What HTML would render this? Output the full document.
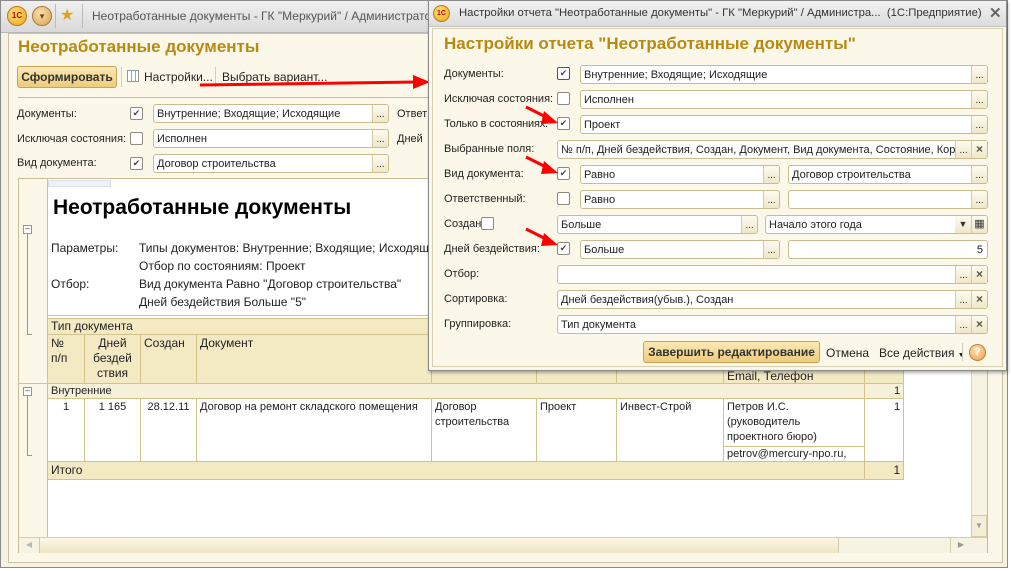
<!DOCTYPE html>
<html><head><meta charset="utf-8"><style>
*{margin:0;padding:0;box-sizing:border-box}
body{width:1011px;height:571px;position:relative;overflow:hidden;background:#fff;font-family:"Liberation Sans",Arial,sans-serif;font-size:11px;color:#222}
.a{position:absolute;white-space:nowrap}
.f{position:absolute;height:19px;border:1px solid #c9bc8f;border-radius:3px;background:#fff;line-height:18px;padding-left:3px;overflow:hidden;white-space:nowrap}
.d{position:absolute;right:0;top:0;width:16px;height:17px;border-left:1px solid #d6cba2;background:linear-gradient(#fdfbf1,#efe7c8);font-style:normal;text-align:center;font-size:10px;line-height:20px;color:#333}
.x{position:absolute;right:0;top:0;width:16px;height:17px;border-left:1px solid #d6cba2;background:linear-gradient(#fdfbf1,#efe7c8);font-style:normal;text-align:center;font-weight:bold;font-size:12px;line-height:17px;color:#554}
.c{position:absolute;width:13px;height:13px;border:1px solid #8d8a80;border-radius:2px;background:#fff;font-size:9px;line-height:11px;text-align:center;color:#444}
.gold{color:#b88a12;font-weight:bold}
table{border-collapse:collapse;table-layout:fixed;position:absolute;font-size:11px}
td{border:1px solid #d2c38c;vertical-align:top;padding:1px 3px;line-height:15px}
.h td{background:#f3eac4;font-size:12px}
</style></head><body>

<!-- MAIN WINDOW -->
<div class="a" style="left:0;top:0;width:1008px;height:568px;border:1px solid #8a8a8a;background:#f6f3e3"></div>
<div class="a" style="left:1px;top:1px;width:1006px;height:32px;background:linear-gradient(#f0f0f0,#d9d9d9);border-bottom:1px solid #b9b9b9"></div>
<div class="a" style="left:7px;top:6px;width:20px;height:20px;border-radius:50%;background:radial-gradient(circle at 40% 35%,#ffe27a,#f0a21a);border:1px solid #c07a10;font-size:8px;font-weight:bold;color:#c00;text-align:center;line-height:18px">1С</div>
<div class="a" style="left:32px;top:6px;width:20px;height:20px;border-radius:50%;background:radial-gradient(circle at 40% 35%,#f8e0b0,#d9a050);border:1px solid #b07a30;font-size:9px;color:#704000;text-align:center;line-height:18px">▾</div>
<div class="a" style="left:55px;top:4px;width:1px;height:24px;background:#bbb"></div>
<div class="a" style="left:60px;top:5px;font-size:16px;color:#e0a020">★</div>
<div class="a" style="left:82px;top:4px;width:1px;height:24px;background:#bbb"></div>
<div class="a" style="left:92px;top:9px;font-size:12px;color:#555">Неотработанные документы - ГК "Меркурий" / Администратор / Д</div>

<div class="a" style="left:8px;top:33px;width:995px;height:530px;background:#fbf8ea;border:1px solid #c9c2a4"></div>
<div class="a gold" style="left:18px;top:37px;font-size:17px">Неотработанные документы</div>

<div class="a" style="left:17px;top:66px;width:100px;height:22px;border:1px solid #c9a456;border-radius:3px;background:linear-gradient(#fbe9b4,#eecb7c);font-weight:bold;font-size:12px;text-align:center;line-height:20px;color:#333">Сформировать</div>
<div class="a" style="left:121px;top:67px;width:1px;height:20px;background:#ccc"></div>
<div class="a" style="left:127px;top:70px;width:12px;height:12px;border:1px solid #8899aa;background:repeating-linear-gradient(90deg,#fff 0 3px,#99a8b8 3px 4px)"></div>
<div class="a" style="left:144px;top:70px;font-size:12px">Настройки...</div>
<div class="a" style="left:215px;top:67px;width:1px;height:20px;background:#ccc"></div>
<div class="a" style="left:222px;top:70px;font-size:12px">Выбрать вариант...</div>
<div class="a" style="left:18px;top:97px;width:420px;height:1px;background:#c9bd92"></div>

<div class="a" style="left:17px;top:108px">Документы:</div>
<div class="c" style="left:130px;top:107px">✔</div>
<div class="f" style="left:153px;top:104px;width:236px">Внутренние; Входящие; Исходящие<i class="d">...</i></div>
<div class="a" style="left:397px;top:108px">Ответ</div>
<div class="a" style="left:17px;top:133px">Исключая состояния:</div>
<div class="c" style="left:130px;top:132px"></div>
<div class="f" style="left:153px;top:129px;width:236px">Исполнен<i class="d">...</i></div>
<div class="a" style="left:397px;top:133px">Дней</div>
<div class="a" style="left:17px;top:157px">Вид документа:</div>
<div class="c" style="left:130px;top:157px">✔</div>
<div class="f" style="left:153px;top:154px;width:236px">Договор строительства<i class="d">...</i></div>

<!-- report panel -->
<div class="a" style="left:18px;top:178px;width:970px;height:375px;border:1px solid #c7bd95;background:#fbf8ea"></div>
<div class="a" style="left:47px;top:179px;width:924px;height:358px;background:#fff;border-left:1px solid #d2c38c"></div>
<div class="a" style="left:48px;top:180px;width:63px;height:7px;border:1px solid #d8e0f0;background:#eef2fa"></div>
<div class="a" style="left:53px;top:196px;font-size:21px;font-weight:bold;color:#000">Неотработанные документы</div>
<div class="a" style="left:51px;top:239px;font-size:12px;line-height:18px">Параметры:<br><br>Отбор:</div>
<div class="a" style="left:139px;top:239px;font-size:12px;line-height:18px">Типы документов: Внутренние; Входящие; Исходящие<br>Отбор по состояниям: Проект<br>Вид документа Равно "Договор строительства"<br>Дней бездействия Больше "5"</div>
<div class="a" style="left:47px;top:315px;width:924px;height:1px;background:#d2c38c"></div>
<div class="a" style="left:23px;top:225px;width:9px;height:9px;border:1px solid #a09870;background:#fff;font-size:8px;line-height:6px;text-align:center">–</div>
<div class="a" style="left:27px;top:234px;width:5px;height:101px;border-left:1px solid #a09870;border-bottom:1px solid #a09870"></div>
<div class="a" style="left:23px;top:387px;width:9px;height:9px;border:1px solid #a09870;background:#fff;font-size:8px;line-height:6px;text-align:center">–</div>
<div class="a" style="left:27px;top:396px;width:5px;height:60px;border-left:1px solid #a09870;border-bottom:1px solid #a09870"></div>
<div class="a" style="left:18px;top:383px;width:29px;height:1px;background:#d2c38c"></div>

<table style="left:47px;top:318px;width:856px">
<colgroup><col style="width:37px"><col style="width:56px"><col style="width:56px"><col style="width:235px"><col style="width:105px"><col style="width:80px"><col style="width:107px"><col style="width:141px"><col style="width:39px"></colgroup>
<tr class="h" style="height:16px"><td colspan="9" style="line-height:13px;border-right-color:#f3eac4">Тип документа</td></tr>
<tr class="h" style="height:49px"><td>№<br>п/п</td><td style="text-align:center">Дней<br>бездей<br>ствия</td><td>Создан</td><td>Документ</td><td></td><td></td><td></td><td style="vertical-align:bottom;line-height:12px;overflow:hidden">Email, Телефон</td><td></td></tr>
<tr style="height:15px;background:#f7f1d9"><td colspan="8" style="line-height:12px">Внутренние</td><td style="text-align:right;line-height:12px">1</td></tr>
<tr style="height:43px"><td rowspan="2" style="text-align:center">1</td><td rowspan="2" style="text-align:center">1 165</td><td rowspan="2" style="text-align:center">28.12.11</td><td rowspan="2">Договор на ремонт складского помещения</td><td rowspan="2">Договор<br>строительства</td><td rowspan="2">Проект</td><td rowspan="2">Инвест-Строй</td><td>Петров И.С.<br>(руководитель<br>проектного бюро)</td><td rowspan="2" style="text-align:right">1</td></tr>
<tr style="height:15px"><td style="line-height:12px">petrov@mercury-npo.ru,</td></tr>
<tr class="h" style="height:18px"><td colspan="8" style="line-height:15px">Итого</td><td style="text-align:right">1</td></tr>
</table>

<div class="a" style="left:971px;top:179px;width:16px;height:358px;background:#f7f3e2;border-left:1px solid #ddd4b0"></div>
<div class="a" style="left:971px;top:515px;width:16px;height:22px;border:1px solid #d6cca6;background:#f3eed8;color:#999;font-size:8px;text-align:center;line-height:20px">▼</div>
<div class="a" style="left:19px;top:537px;width:968px;height:16px;background:#f7f3e2;border-top:1px solid #d6cca6"></div>
<div class="a" style="left:19px;top:537px;width:21px;height:16px;border-right:1px solid #d6cca6;color:#bbb;font-size:8px;text-align:center;line-height:16px">◀</div>
<div class="a" style="left:40px;top:538px;width:799px;height:15px;background:linear-gradient(#fbf7e6,#eee5c3);border-right:1px solid #d6cca6"></div>
<div class="a" style="left:950px;top:537px;width:21px;height:16px;border-left:1px solid #d6cca6;color:#999;font-size:8px;text-align:center;line-height:16px">▶</div>

<svg class="a" style="left:195px;top:70px" width="240" height="25"><line x1="5" y1="15" x2="222" y2="12" stroke="#f00" stroke-width="3"/><polygon points="218,5 235,12 218,19" fill="#f00"/></svg>

<!-- DIALOG -->
<div class="a" style="left:428px;top:0;width:579px;height:371px;border:1px solid #8a8a8a;background:#fbf8ea;box-shadow:1px 2px 3px rgba(0,0,0,.3)"></div>
<div class="a" style="left:429px;top:1px;width:577px;height:26px;background:linear-gradient(#f2f2f2,#dcdcdc);border-bottom:1px solid #c4c4c4"></div>
<div class="a" style="left:433px;top:5px;width:17px;height:17px;border-radius:50%;background:radial-gradient(circle at 40% 35%,#ffe27a,#f0a21a);border:1px solid #c07a10;font-size:7px;font-weight:bold;color:#c00;text-align:center;line-height:15px">1С</div>
<div class="a" style="left:459px;top:7px;font-size:11.3px;color:#333">Настройки отчета "Неотработанные документы" - ГК "Меркурий" / Администра...&nbsp; (1С:Предприятие)</div>
<div class="a" style="left:989px;top:4px;font-size:15px;color:#666;font-weight:bold">✕</div>
<div class="a" style="left:432px;top:28px;width:571px;height:339px;border:1px solid #d8d0b0"></div>
<div class="a gold" style="left:444px;top:34px;font-size:17px">Настройки отчета "Неотработанные документы"</div>

<div class="a" style="left:444px;top:68px">Документы:</div>
<div class="c" style="left:557px;top:67px;border-color:#555">✔</div>
<div class="f" style="left:580px;top:65px;width:408px">Внутренние; Входящие; Исходящие<i class="d">...</i></div>

<div class="a" style="left:444px;top:93px">Исключая состояния:</div>
<div class="c" style="left:557px;top:92px"></div>
<div class="f" style="left:580px;top:90px;width:408px">Исполнен<i class="d">...</i></div>

<div class="a" style="left:444px;top:118px;letter-spacing:-0.2px">Только в состояниях:</div>
<div class="c" style="left:557px;top:117px">✔</div>
<div class="f" style="left:580px;top:115px;width:408px">Проект<i class="d">...</i></div>

<div class="a" style="left:444px;top:143px">Выбранные поля:</div>
<div class="f" style="left:557px;top:140px;width:431px;padding-right:34px">№ п/п, Дней бездействия, Создан, Документ, Вид документа, Состояние, Кор<i class="d" style="right:16px">...</i><i class="x">×</i></div>

<div class="a" style="left:444px;top:168px">Вид документа:</div>
<div class="c" style="left:557px;top:167px">✔</div>
<div class="f" style="left:580px;top:165px;width:200px">Равно<i class="d">...</i></div>
<div class="f" style="left:788px;top:165px;width:200px">Договор строительства<i class="d">...</i></div>

<div class="a" style="left:444px;top:193px">Ответственный:</div>
<div class="c" style="left:557px;top:192px"></div>
<div class="f" style="left:580px;top:190px;width:200px">Равно<i class="d">...</i></div>
<div class="f" style="left:788px;top:190px;width:200px"><i class="d">...</i></div>

<div class="a" style="left:444px;top:218px">Создан:</div>
<div class="c" style="left:481px;top:217px"></div>
<div class="f" style="left:557px;top:215px;width:201px">Больше<i class="d">...</i></div>
<div class="f" style="left:765px;top:215px;width:223px">Начало этого года<i class="d" style="right:16px;border-left:none;font-size:9px;line-height:17px">▼</i><i class="d" style="font-size:11px;line-height:17px">▦</i></div>

<div class="a" style="left:444px;top:243px">Дней бездействия:</div>
<div class="c" style="left:557px;top:242px">✔</div>
<div class="f" style="left:580px;top:240px;width:200px">Больше<i class="d">...</i></div>
<div class="f" style="left:788px;top:240px;width:200px;text-align:right;padding-right:4px">5</div>

<div class="a" style="left:444px;top:268px">Отбор:</div>
<div class="f" style="left:557px;top:265px;width:431px"><i class="d" style="right:16px">...</i><i class="x">×</i></div>
<div class="a" style="left:444px;top:293px">Сортировка:</div>
<div class="f" style="left:557px;top:290px;width:431px">Дней бездействия(убыв.), Создан<i class="d" style="right:16px">...</i><i class="x">×</i></div>
<div class="a" style="left:444px;top:318px">Группировка:</div>
<div class="f" style="left:557px;top:315px;width:431px">Тип документа<i class="d" style="right:16px">...</i><i class="x">×</i></div>

<div class="a" style="left:643px;top:341px;width:177px;height:22px;border:1px solid #c9a456;border-radius:3px;background:linear-gradient(#fbe9b4,#eecb7c);font-weight:bold;font-size:12px;text-align:center;line-height:20px;color:#333">Завершить редактирование</div>
<div class="a" style="left:826px;top:346px;font-size:12px">Отмена</div>
<div class="a" style="left:879px;top:346px;font-size:12px">Все действия <span style="font-size:7px">▼</span></div>
<div class="a" style="left:962px;top:343px;width:1px;height:18px;background:#ccc"></div>
<div class="a" style="left:969px;top:344px;width:17px;height:17px;border-radius:50%;background:radial-gradient(circle at 40% 35%,#fde0b0,#e8a050);border:1px solid #c08040;font-size:11px;font-weight:bold;color:#fff;text-align:center;line-height:15px">?</div>

<svg class="a" style="left:520px;top:100px" width="50" height="170">
<g stroke="#f00" stroke-width="3" fill="#f00">
<line x1="6" y1="7" x2="28" y2="18"/><polygon points="24,11 38,23 21,24" stroke="none"/>
<line x1="6" y1="57" x2="28" y2="68"/><polygon points="24,61 38,73 21,74" stroke="none"/>
<line x1="6" y1="129" x2="28" y2="140"/><polygon points="24,133 38,145 21,146" stroke="none"/>
</g></svg>
</body></html>
